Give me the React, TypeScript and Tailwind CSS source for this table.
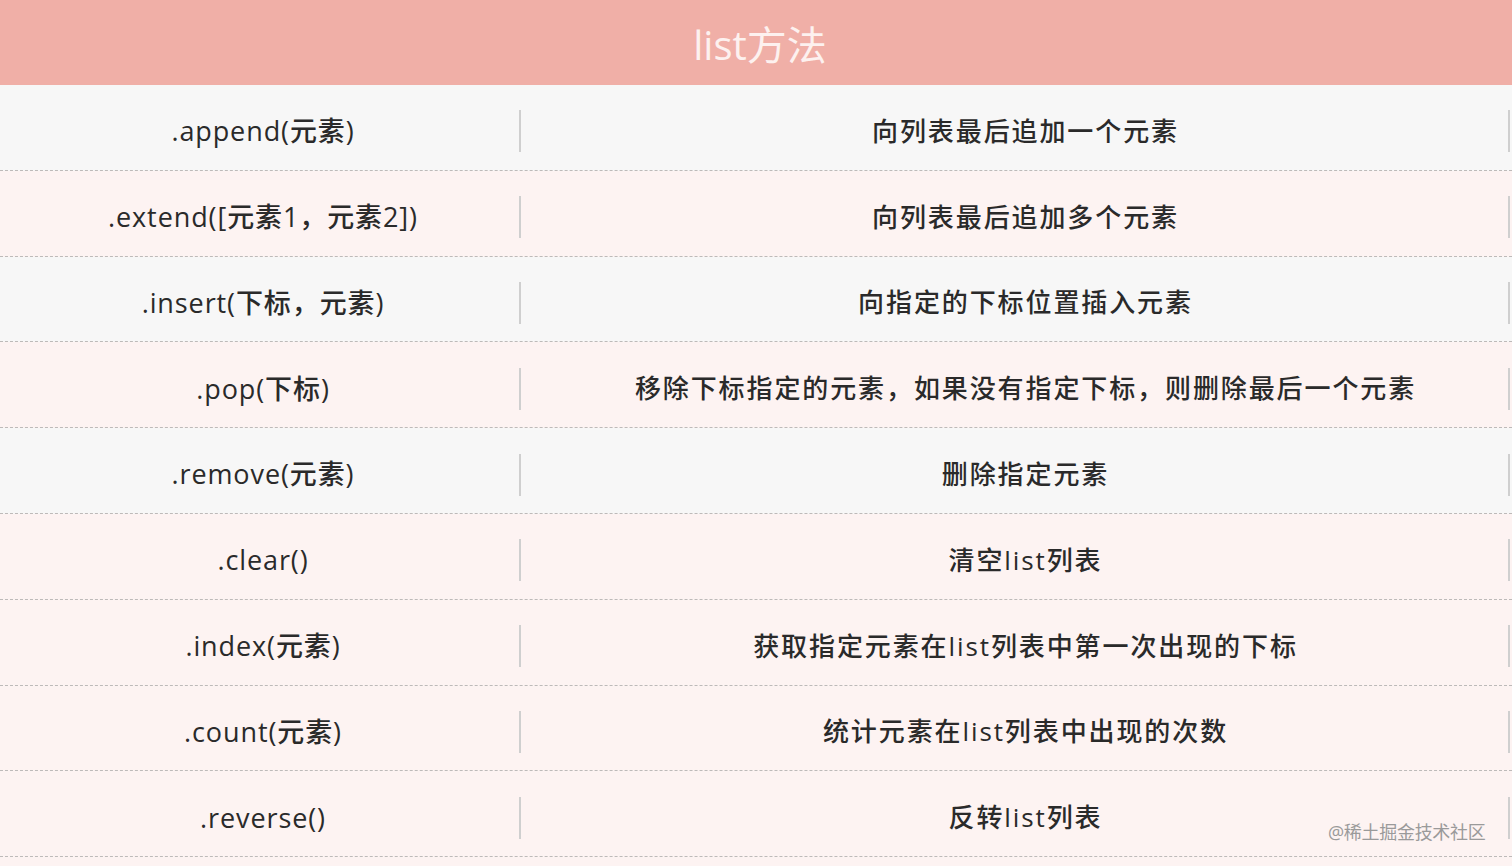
import React from "react";

const rows: { m: string; d: string; bg: string }[] = [
  { m: ".append(元素)", d: "向列表最后追加一个元素", bg: "bg-[#f7f7f7]" },
  { m: ".extend([元素1，元素2])", d: "向列表最后追加多个元素", bg: "bg-[#fdf3f2]" },
  { m: ".insert(下标，元素)", d: "向指定的下标位置插入元素", bg: "bg-[#f7f7f7]" },
  { m: ".pop(下标)", d: "移除下标指定的元素，如果没有指定下标，则删除最后一个元素", bg: "bg-[#fdf3f2]" },
  { m: ".remove(元素)", d: "删除指定元素", bg: "bg-[#f7f7f7]" },
  { m: ".clear()", d: "清空list列表", bg: "bg-[#fdf3f2]" },
  { m: ".index(元素)", d: "获取指定元素在list列表中第一次出现的下标", bg: "bg-[#fdf3f2]" },
  { m: ".count(元素)", d: "统计元素在list列表中出现的次数", bg: "bg-[#fdf3f2]" },
  { m: ".reverse()", d: "反转list列表", bg: "bg-[#fdf3f2]" },
];

export default function App() {
  return (
    <div
      className="relative w-[1512px] h-[866px] overflow-hidden bg-[#fdf3f2]"
      style={{ fontFamily: '"Open Sans", "Noto Sans CJK SC", sans-serif' }}
    >
      <div className="h-[85px] bg-[#f0afa7] flex items-center justify-center pt-[4px] pl-[8px]">
        <span className="text-[40px] text-[#fdf1ef]">list方法</span>
      </div>
      {rows.map((r, i) => (
        <div
          key={i}
          className={`h-[85.8px] flex items-center border-b border-dashed border-[#bdbab9] ${r.bg}`}
        >
          <div className="w-[519px] flex justify-center pt-[8px] pl-[7px] text-[27px] font-medium text-[#2a2a2a] tracking-[0.9px]">
            {r.m}
          </div>
          <div className="w-[2px] h-[42px] mt-[8px] bg-[#cfcfcf]" />
          <div className="flex-1 flex justify-center pt-[8px] pl-[22px] text-[26px] font-medium text-[#2a2a2a] tracking-[1.9px]">
            {r.d}
          </div>
          <div className="w-[2px] h-[42px] mt-[8px] bg-[#cfcfcf] mr-[2px]" />
        </div>
      ))}
      <div className="absolute left-[1328px] top-[819px] text-[18px] text-[#9a9a9a] tracking-[-0.3px]">
        @稀土掘金技术社区
      </div>
    </div>
  );
}
